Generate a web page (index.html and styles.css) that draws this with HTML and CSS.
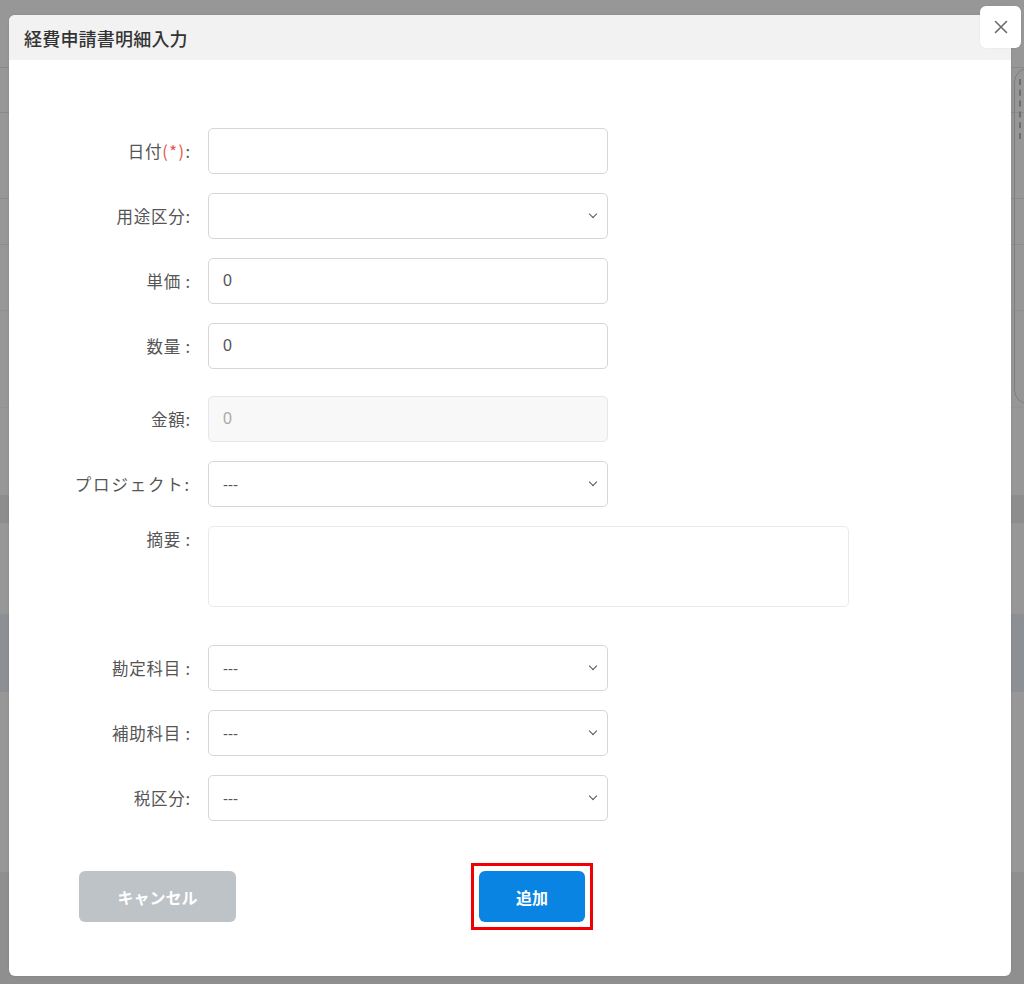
FILE: index.html
```html
<!DOCTYPE html>
<html lang="ja">
<head>
<meta charset="utf-8">
<title>経費申請書明細入力</title>
<link rel="stylesheet" href="styles.css">
</head>
<body>
<div class="backdrop">
  <div class="bg-widget"></div>
</div>
<div class="overlay">
  <div class="modal">
    <div class="modal-header">経費申請書明細入力</div>
    <button class="close-btn" aria-label="close">
      <svg width="16" height="16" viewBox="0 0 16 16"><path d="M2.5 2.5 L13.5 13.5 M13.5 2.5 L2.5 13.5" stroke="#6b6b6b" stroke-width="1.6" stroke-linecap="round" fill="none"/></svg>
    </button>
    <div class="modal-body">
      <form class="form">
        <label class="lbl">日付<span class="req">(*)</span>:</label>
        <div class="field"><input class="ctl" type="text" value=""></div>

        <label class="lbl">用途区分:</label>
        <div class="field"><div class="ctl sel"><span></span><span class="chev"></span></div></div>

        <label class="lbl">単価 :</label>
        <div class="field"><div class="ctl">0</div></div>

        <label class="lbl">数量 :</label>
        <div class="field"><div class="ctl">0</div></div>

        <label class="lbl extra">金額:</label>
        <div class="field extra"><div class="ctl disabled">0</div></div>

        <label class="lbl kana">プロジェクト:</label>
        <div class="field"><div class="ctl sel"><span>---</span><span class="chev"></span></div></div>

        <label class="lbl top">摘要 :</label>
        <div class="field wide"><div class="ctl area"></div></div>

        <label class="lbl after-area">勘定科目 :</label>
        <div class="field after-area"><div class="ctl sel"><span>---</span><span class="chev"></span></div></div>

        <label class="lbl">補助科目 :</label>
        <div class="field"><div class="ctl sel"><span>---</span><span class="chev"></span></div></div>

        <label class="lbl">税区分:</label>
        <div class="field"><div class="ctl sel"><span>---</span><span class="chev"></span></div></div>
      </form>
      <div class="actions">
        <button class="btn cancel" type="button">キャンセル</button>
        <div class="highlight"><button class="btn add" type="button">追加</button></div>
      </div>
    </div>
  </div>
</div>
</body>
</html>
```

FILE: styles.css
```css
* { box-sizing: border-box; }
html, body {
  margin: 0;
  padding: 0;
  width: 1024px;
  height: 984px;
  overflow: hidden;
}
body {
  font-family: "Noto Sans CJK JP", "Noto Sans", sans-serif;
  position: relative;
  background:
    linear-gradient(#8a8a8a, #8a8a8a) 0 67px / 100% 1px no-repeat,
    linear-gradient(#8a8a8a, #8a8a8a) 0 112px / 100% 1px no-repeat,
    linear-gradient(#8c8c8c, #8c8c8c) 0 198px / 100% 1px no-repeat,
    linear-gradient(#8c8c8c, #8c8c8c) 0 244px / 100% 1px no-repeat,
    linear-gradient(#909090, #909090) 0 310px / 100% 1px no-repeat,
    linear-gradient(#939393, #939393) 0 407px / 100% 1px no-repeat,
    linear-gradient(#8d8d8d, #8d8d8d) 0 495px / 100% 28px no-repeat,
    linear-gradient(#8c8f94, #8c8f94) 0 614px / 100% 78px no-repeat,
    linear-gradient(#888b90, #888b90) 0 652px / 100% 1px no-repeat,
    linear-gradient(#8f8f8f, #8f8f8f) 0 872px / 100% 112px no-repeat,
    #979797;
}
.backdrop {
  position: absolute;
  inset: 0;
}
.bg-widget {
  position: absolute;
  left: 1014px;
  top: 68px;
  width: 40px;
  height: 336px;
  border: 1px solid #7d7d7d;
  border-radius: 14px;
}
.bg-widget::before {
  content: "";
  position: absolute;
  left: 4px;
  top: 10px;
  height: 60px;
  border-left: 2px dashed #6e6e6e;
}
.overlay {
  position: absolute;
  inset: 0;
  padding: 15px 13px 8px 9px;
}
.modal {
  position: relative;
  width: 1002px;
  height: 961px;
  background: #fff;
  border-radius: 6px;
  box-shadow: 0 0 2px rgba(0,0,0,0.15);
}
.modal-header {
  height: 45px;
  background: #f2f2f2;
  border-radius: 6px 6px 0 0;
  padding: 0 0 0 15px;
  font-size: 18px;
  font-weight: 500;
  color: #333;
  line-height: 47px;
  letter-spacing: 0.2px;
}
.close-btn {
  position: absolute;
  right: -10px;
  top: -9px;
  width: 41px;
  height: 42px;
  background: #fff;
  border: none;
  border-radius: 6px;
  display: flex;
  align-items: center;
  justify-content: center;
  padding: 0;
  box-shadow: 0 0 2px rgba(0,0,0,0.08);
}
.modal-body {
  padding: 68px 0 0 0;
}
.form {
  display: grid;
  grid-template-columns: 181px 400px;
  column-gap: 18px;
  row-gap: 19px;
  align-items: center;
}
.lbl {
  text-align: right;
  font-size: 16.5px;
  letter-spacing: 0.8px;
  color: #555;
  white-space: nowrap;
  margin-right: -1px;
}
.lbl.kana { letter-spacing: 1.8px; }
.lbl.top {
  align-self: start;
  padding-top: 1px;
}
.req { color: #e5534b; letter-spacing: 1.5px; }
.extra { margin-top: 8px; }
.after-area { margin-top: 19px; }
.field.wide { width: 641px; }
.ctl {
  display: flex;
  align-items: center;
  width: 100%;
  height: 46px;
  border: 1px solid #d6d6d6;
  border-radius: 5px;
  padding: 0 14px;
  font-family: "Liberation Sans", "Noto Sans", sans-serif;
  font-size: 16px;
  color: #555;
  background: #fff;
}
input.ctl { outline: none; }
.ctl.disabled {
  background: #f8f8f8;
  border-color: #e6e6e6;
  color: #aaa;
}
.ctl.area {
  height: 81px;
  border-color: #eaeaea;
}
.ctl.sel {
  justify-content: space-between;
  padding-right: 11px;
}
.ctl.sel span:first-child {
  font-size: 15px;
  color: #555;
}
.chev {
  width: 6px;
  height: 6px;
  border-right: 1.5px solid #555;
  border-bottom: 1.5px solid #555;
  transform: rotate(45deg);
  margin-top: -4px;
}
.actions {
  display: flex;
  align-items: center;
  margin-top: 42px;
  padding-left: 70px;
}
.btn {
  height: 51px;
  border: none;
  border-radius: 6px;
  color: #fff;
  font-family: "Noto Sans CJK JP", sans-serif;
  font-size: 16px;
  font-weight: 700;
}
.btn.cancel {
  width: 157px;
  background: #bec3c7;
}
.highlight {
  margin-left: 235px;
  border: 3px solid #f00000;
  padding: 5px 5px;
}
.btn.add {
  width: 106px;
  background: #0a84e2;
  display: block;
}
```
